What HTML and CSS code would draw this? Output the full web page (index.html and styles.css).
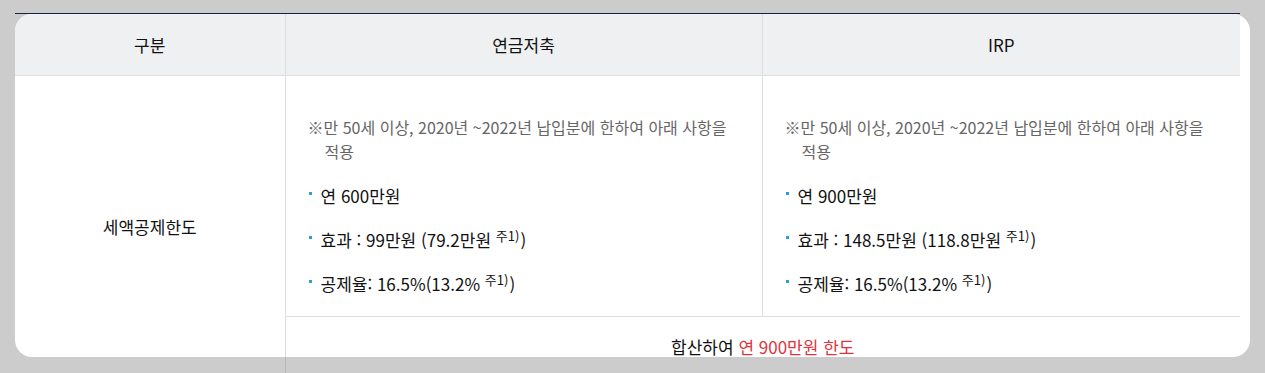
FILE: index.html
```html
<!DOCTYPE html>
<html lang="ko">
<head>
<meta charset="utf-8">
<title>세액공제한도</title>
<link rel="stylesheet" href="styles.css">
</head>
<body>
<div class="page">
  <div class="topline"></div>
  <div class="card">
    <table class="tbl">
      <colgroup>
        <col class="c1">
        <col class="c2">
        <col class="c3">
      </colgroup>
      <thead>
        <tr>
          <th>구분</th>
          <th>연금저축</th>
          <th>IRP</th>
        </tr>
      </thead>
      <tbody>
        <tr>
          <td class="label" rowspan="2">세액공제한도</td>
          <td class="content">
            <p class="note">※만 50세 이상, 2020년 ~2022년 납입분에 한하여 아래 사항을 적용</p>
            <ul class="bullets">
              <li><span>연 600만원</span></li>
              <li><span>효과 : 99만원 (79.2만원 <sup>주1)</sup>)</span></li>
              <li><span>공제율: 16.5%(13.2% <sup>주1)</sup>)</span></li>
            </ul>
          </td>
          <td class="content">
            <p class="note">※만 50세 이상, 2020년 ~2022년 납입분에 한하여 아래 사항을 적용</p>
            <ul class="bullets">
              <li><span>연 900만원</span></li>
              <li><span>효과 : 148.5만원 (118.8만원 <sup>주1)</sup>)</span></li>
              <li><span>공제율: 16.5%(13.2% <sup>주1)</sup>)</span></li>
            </ul>
          </td>
        </tr>
        <tr>
          <td class="total" colspan="2">합산하여 <span class="red">연 900만원 한도</span></td>
        </tr>
      </tbody>
    </table>
  </div>
  <div class="tail"></div>
</div>
</body>
</html>
```
FILE: styles.css
```css
html, body {
  margin: 0;
  padding: 0;
  background: #cccccc;
  font-family: "Noto Sans CJK KR", "Noto Sans", sans-serif;
  color: #111;
  overflow: hidden;
}
.page {
  padding: 13px 0 0 15px;
}
.topline {
  width: 1225px;
  height: 1px;
  background: #1b1e4c;
}
.card {
  width: 1235px;
  height: 343px;
  background: #fff;
  border-radius: 17px;
  overflow: hidden;
}
.tbl {
  width: 1225px;
  border-collapse: collapse;
  table-layout: fixed;
  font-size: 17px;
  line-height: 24px;
}
.c1 { width: 270px; }
.c2 { width: 477px; }
.c3 { width: 478px; }
.tbl th {
  height: 61px;
  padding: 0;
  background: #eff0f2;
  font-weight: 400;
  font-size: 17px;
  color: #111;
  border-left: 1px solid #dedede;
  border-bottom: 1px solid #dedede;
  text-align: center;
  vertical-align: middle;
}
.tbl th:first-child { border-left: 0; }
.tbl td {
  padding: 0;
  border-left: 1px solid #dedede;
  border-bottom: 1px solid #dedede;
}
.tbl td.label {
  border-left: 0;
  text-align: center;
  vertical-align: middle;
}
.tbl td.content {
  vertical-align: top;
  padding: 39px 24px 19px 22px;
  height: 182px;
}
.note {
  margin: 0;
  font-size: 16px;
  line-height: 24px;
  color: #666;
  padding-left: 17px;
  text-indent: -17px;
}
.bullets {
  list-style: none;
  margin: 21px 0 0;
  padding: 0 0 0 1px;
}
.bullets li {
  display: flex;
  align-items: flex-start;
  gap: 9px;
  margin-top: 20px;
  font-size: 17px;
  line-height: 24px;
  white-space: nowrap;
}
.bullets li:first-child { margin-top: 0; }
.bullets li::before {
  content: "";
  flex: none;
  width: 3px;
  height: 3px;
  margin-top: 8px;
  background: #2a9fe0;
}
.bullets sup {
  font-size: 13px;
  line-height: 0;
  vertical-align: 6px;
  margin-right: 1px;
}
.tbl td.total {
  text-align: center;
  padding: 20px 0 22px;
  line-height: 20px;
  border-bottom: 0;
}
.red { color: #e2333c; }
.tail {
  margin-left: 270px;
  width: 0;
  height: 16px;
  border-left: 1px solid #b8b8b8;
}
```
